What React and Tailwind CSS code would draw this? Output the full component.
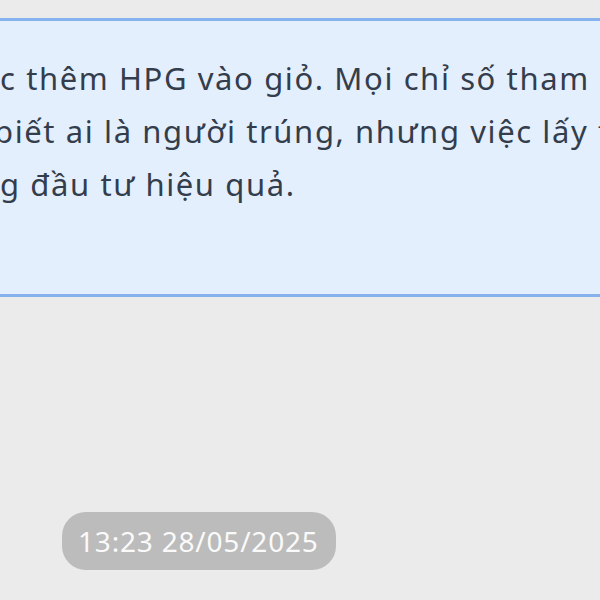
import React from "react";

const lines = [
  { text: "c thêm HPG vào giỏ. Mọi chỉ số tham", shift: "ml-0" },
  { text: "biết ai là người trúng, nhưng việc lấy thêm", shift: "-ml-[6px]" },
  { text: "g đầu tư hiệu quả.", shift: "ml-0" },
];

const App = () => {
  return (
    <div
      className="w-[600px] h-[600px] bg-[#ebebeb] overflow-hidden"
      style={{ fontFamily: '"Noto Sans", "Open Sans", sans-serif' }}
    >
      <div className="pt-[18px]">
        {/* Message bubble */}
        <div className="h-[279px] bg-[#e4effd] border-t-[3px] border-b-[3px] border-[#86b2ee] overflow-hidden pt-[31px]">
          {lines.map((l, i) => (
            <div
              key={i}
              className={`whitespace-nowrap text-[31px] leading-[53px] tracking-[1.6px] text-[#333d4c] ${l.shift}`}
            >
              {l.text}
            </div>
          ))}
        </div>
      </div>
      {/* Timestamp */}
      <div className="pt-[215px] pl-[62px]">
        <span className="inline-flex items-center h-[58px] pl-[16px] pr-[17px] rounded-[24px] bg-[#bcbcbc] text-[#fafafa] text-[28px] tracking-[0.8px]">
          13:23 28/05/2025
        </span>
      </div>
    </div>
  );
};

export default App;
